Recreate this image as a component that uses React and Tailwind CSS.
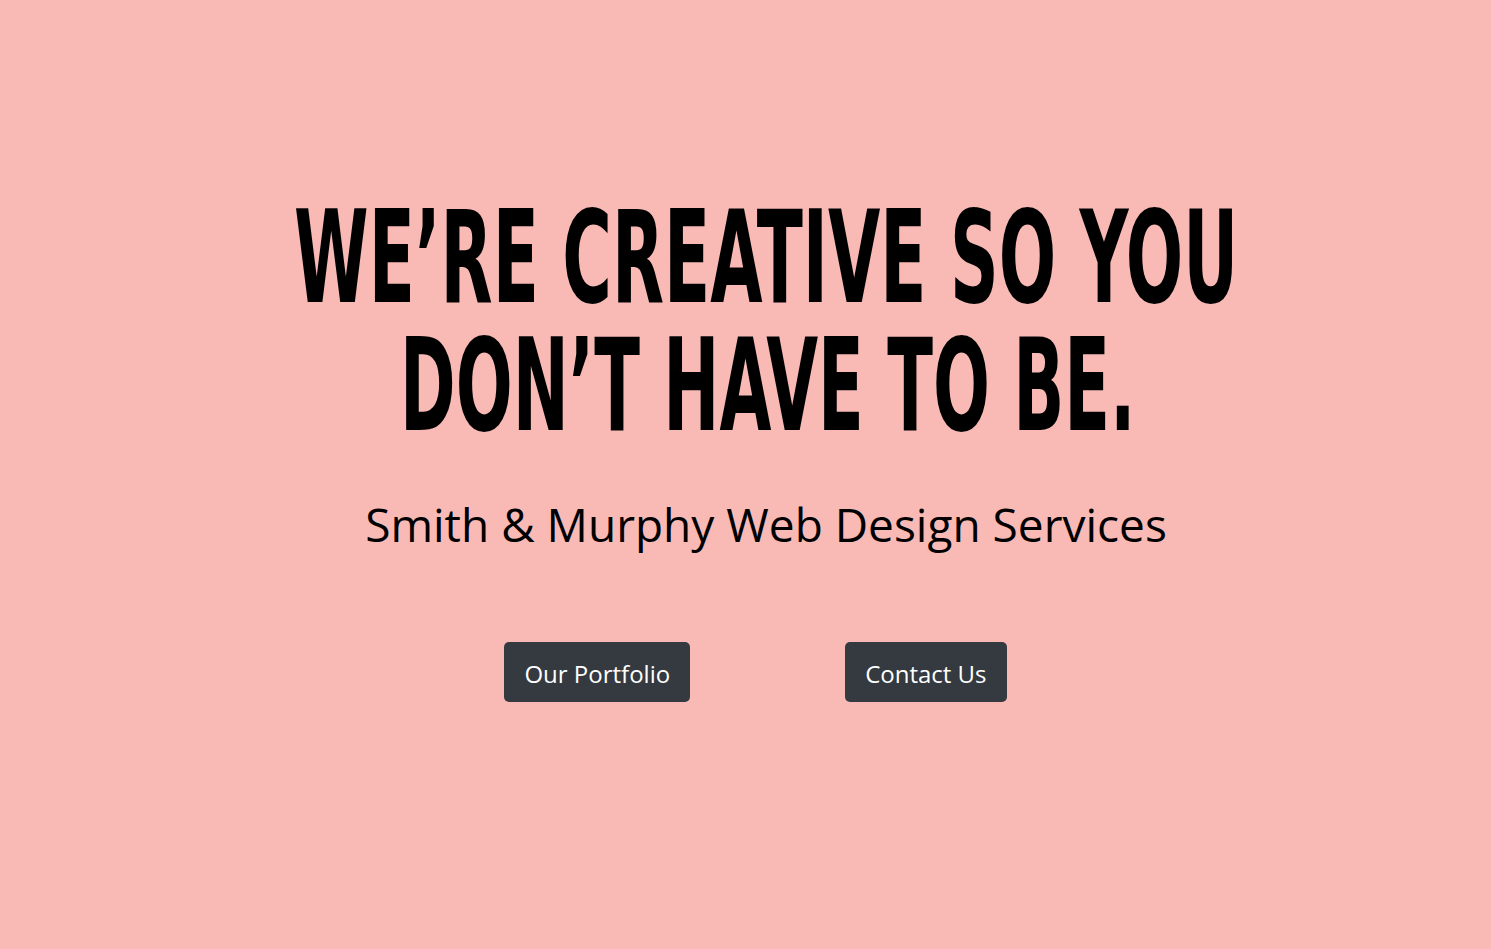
export default function App() {
  return (
    <div className="min-h-[949px] w-full overflow-hidden bg-[#f9bab6] pl-[41px] pt-[194px]">
      <div className="flex flex-col items-center">
        <h1
          className="whitespace-nowrap text-center text-[128px] leading-[128px] font-bold text-black uppercase"
          style={{ fontFamily: '"Liberation Sans Narrow", "DejaVu Sans Condensed", sans-serif' }}
        >
          <span className="inline-block scale-x-[0.587]">WE’RE CREATIVE SO YOU</span>
          <br />
          <span className="inline-block translate-x-[2px] scale-x-[0.582]">DON’T HAVE TO BE.</span>
        </h1>
        <p
          className="mt-[44px] text-[46px] leading-[60px] text-black"
          style={{ fontFamily: '"Open Sans", sans-serif' }}
        >
          Smith &amp; Murphy Web Design Services
        </p>
        <div className="mt-[88px] -ml-[21px] flex gap-[155px]" style={{ fontFamily: '"Open Sans", sans-serif' }}>
          <button className="rounded-[5px] bg-[#343a40] px-[20px] pt-[14px] pb-[10px] text-[24px] leading-[36px] text-white">
            Our Portfolio
          </button>
          <button className="rounded-[5px] bg-[#343a40] px-[20px] pt-[14px] pb-[10px] text-[24px] leading-[36px] text-white">
            Contact Us
          </button>
        </div>
      </div>
    </div>
  );
}
